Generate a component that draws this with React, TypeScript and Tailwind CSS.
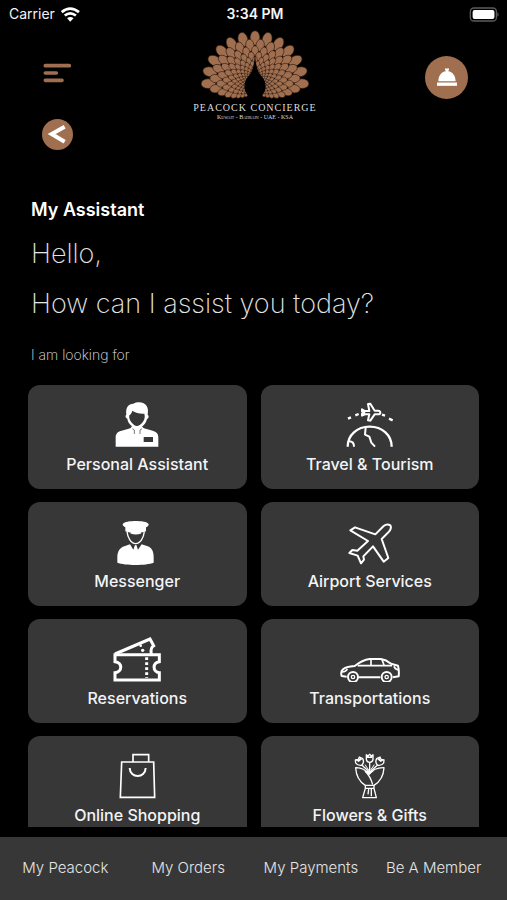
import type { ReactNode } from 'react';

const feathers = [0, 1, 2, 3, 4, 5, 6, 7, 8, 9, 10].flatMap((ring) => {
  const radius = 137 * Math.pow(0.845, ring);
  const items = [];
  for (let i = -11; i <= 11; i++) {
    const angle = (ring % 2 ? i + 0.5 : i) * 15;
    const rad = (angle * Math.PI) / 180;
    const x = 202 + radius * Math.sin(rad) * 1.02;
    const y = 163 - radius * Math.cos(rad);
    const limit = ring === 0 ? 91 : 152;
    if (Math.abs(angle) > limit || y > 204 - radius * 0.08) continue;
    items.push({
      key: `${ring}-${i}`,
      x,
      y,
      angle,
      rx: radius * 0.108,
      ry: radius * 0.16,
      stroke: 0.8 + radius * 0.008,
    });
  }
  return items;
});

function PeacockLogo() {
  return (
    <div className="flex flex-col items-center font-['Liberation_Serif',serif] text-[#dedede]">
      <svg viewBox="40 2 324 210" className="h-[70px] w-[108px]" aria-hidden="true">
        {feathers.map((f) => (
          <ellipse
            key={f.key}
            cx={f.x}
            cy={f.y}
            rx={f.rx}
            ry={f.ry}
            transform={`rotate(${f.angle} ${f.x} ${f.y})`}
            fill="#a06f50"
            stroke="#24140c"
            strokeWidth={f.stroke}
          />
        ))}
        <path
          d="M202 72 C204 108 209 128 223 142 C238 160 237 184 222 200 L216 212 H188 L182 200 C167 184 166 160 181 142 C195 128 200 108 202 72Z"
          fill="#000"
        />
      </svg>
      <span className="mt-[3px] text-[10px] leading-[10px] tracking-widest whitespace-nowrap">PEACOCK CONCIERGE</span>
      <span className="text-[6px] leading-[8px] whitespace-nowrap [font-variant:small-caps]">
        Kuwait - Bahrain - UAE - KSA
      </span>
    </div>
  );
}

function TileIcon({ viewBox, children }: { viewBox: string; children: ReactNode }) {
  return (
    <svg
      viewBox={viewBox}
      className="h-12 w-15"
      fill="none"
      stroke="#fff"
      strokeWidth="7"
      strokeLinejoin="round"
      aria-hidden="true"
    >
      {children}
    </svg>
  );
}

const AssistantIcon = () => (
  <TileIcon viewBox="262 60 180 144">
    <path
      d="M288 200 V171 C288 160 296 154 306 152 L332 145 L337 139 C328 132 324 124 323 116 C316 113 317 106 320 104 C317 82 327 71 341 71 C355 63 375 66 381 78 C386 86 385 96 384 104 C389 108 387 115 382 117 C380 126 375 134 367 140 L373 145 L399 152 C410 155 416 161 416 171 V200Z"
      fill="#fff"
      stroke="none"
    />
    <path
      d="M329 106 C334 103 337 97 338 92 C347 99 362 102 374 101 C376 109 376 117 370 125 C363 134 357 138 352 138 C346 138 337 131 332 122 C329 117 328 111 329 106Z"
      fill="#373737"
      stroke="none"
    />
    <path d="M338 146 L344 150 V162 M367 146 L361 150 V162" stroke="#373737" strokeWidth="2" />
    <rect x="372" y="171" width="28" height="15" rx="1" fill="#373737" stroke="none" />
  </TileIcon>
);

const TravelIcon = () => (
  <TileIcon viewBox="256 60 180 144">
    <path d="M279 200 C279 166 307 140 345 140 C383 140 411 166 411 200" />
    <path d="M333 142 L331 164 L344 170 L350 188 L361 200 M283 184 Q298 184 298 200" strokeWidth="6" />
    <path d="M280 116 L289 112 M302 106 L312 102 M382 104 L391 107 M403 116 L414 121" />
    <path
      d="M322 88 L331 93 H344 L340 72 L347 71 L360 92 H370 Q377 93 377 98 Q377 103 370 103 H360 L347 122 L340 121 L344 103 H331 L322 107 V101 L329 98 L322 94Z"
      strokeWidth="6"
    />
  </TileIcon>
);

const MessengerIcon = () => (
  <TileIcon viewBox="262 66 180 144">
    <path
      d="M309 88 C311 80 334 78 348 78 C363 78 385 80 387 88 C387 93 382 96 379 97 V109 C362 116 333 116 317 109 V97 C313 95 309 92 309 88Z"
      fill="#fff"
      stroke="none"
    />
    <path d="M322 110 C324 128 334 146 348 146 C362 146 372 128 374 110" strokeWidth="4" />
    <path
      d="M293 203 V188 C293 168 301 158 314 154 L331 148 L341 164 L346 151 H350 L355 164 L366 148 L384 154 C396 158 402 168 402 188 V203 C379 212 316 212 293 203Z"
      fill="#fff"
      stroke="none"
    />
    <path d="M346 151 L344 163 L348 178 L352 163 L350 151Z" fill="#fff" stroke="none" />
    <path d="M333 113 Q348 119 364 113" strokeWidth="5" />
  </TileIcon>
);

const AirportIcon = () => (
  <TileIcon viewBox="256 66 180 144">
    <path
      d="M287 106 L301 97 L362 118 L387 93 Q397 85 407 91 Q412 99 403 110 L381 132 L401 189 L387 200 L355 154 L326 184 L328 194 L319 205 L309 182 L284 174 L293 165 L308 167 L340 138Z"
      strokeWidth="6"
    />
  </TileIcon>
);

const ReservationsIcon = () => (
  <TileIcon viewBox="262 66 180 144">
    <path
      d="M286 128 H419 V149 C398 151 398 180 419 182 V204 H286 V182 C309 180 309 151 286 149 Z"
      strokeWidth="9"
      strokeLinejoin="miter"
    />
    <path d="M286 126 L391 81 L402 101 Q391 108 395 126" strokeWidth="9" strokeLinejoin="miter" />
    <path d="M381 136 V198" strokeWidth="9" strokeDasharray="8 7" />
    <circle cx="369" cy="115" r="5" fill="#fff" stroke="none" />
    <circle cx="363" cy="101" r="4" fill="#fff" stroke="none" />
  </TileIcon>
);

const CarIcon = () => (
  <TileIcon viewBox="256 66 180 144">
    <path
      d="M276 194 L261 192 Q257 178 265 172 Q273 164 300 162 Q323 144 345 141 H379 Q394 143 409 155 L430 161 Q434 175 432 193 L415 196 M312 196 H377"
      strokeWidth="6"
    />
    <path d="M309 161 H412 M349 143 V161 M382 143 L388 159" strokeWidth="5" />
    <path d="M261 180 Q275 179 278 170 M418 163 Q421 173 432 174" strokeWidth="5" />
    <circle cx="295" cy="195" r="15" strokeWidth="6" />
    <circle cx="396" cy="195" r="15" strokeWidth="6" />
    <circle cx="295" cy="195" r="5" strokeWidth="4" />
    <circle cx="396" cy="195" r="5" strokeWidth="4" />
  </TileIcon>
);

const ShoppingIcon = () => (
  <TileIcon viewBox="322 63 180 144">
    <path d="M366 96 H462 L465 202 H362Z M400 94 V74 H447 V94" strokeWidth="5" strokeLinejoin="miter" />
    <path d="M390 114 C391 146 437 146 438 114" strokeWidth="6" />
  </TileIcon>
);

const FlowersIcon = () => (
  <TileIcon viewBox="271 63 180 144">
    <g strokeWidth="4">
      <path d="M350 74 L355 78 L360 73 L365 78 L370 74 V88 Q369 96 360 97 Q351 96 350 88Z M360 97 V124" />
      <path d="M329 81 L326 88 L317 90 L318 99 Q324 108 336 106 Q345 97 339 86Z M337 106 L357 124" />
      <path d="M391 81 L394 88 L403 90 L402 99 Q396 108 384 106 Q375 97 381 86Z M383 106 L363 124" />
      <path d="M346 104 L357 120 M374 104 L363 120" strokeWidth="3" />
      <path d="M318 113 Q342 112 358 133 Q374 112 403 113 Q401 149 373 166 H347 Q320 149 318 113Z" />
      <path d="M346 124 Q362 138 369 164 M347 166 V175 H373 V166 M347 175 L339 203 H380 L373 175 M357 177 L355 193 M365 177 V199" />
    </g>
    <path d="M348 122 H373 L359 134Z M352 76 L360 80 L368 76 V84 H352Z" fill="#fff" stroke="none" />
    <path d="M318 91 L327 89 L331 83 L338 87 L327 96Z M402 91 L393 89 L389 83 L382 87 L393 96Z" fill="#fff" stroke="none" />
  </TileIcon>
);

const services = [
  { label: 'Personal Assistant', icon: <AssistantIcon /> },
  { label: 'Travel & Tourism', icon: <TravelIcon /> },
  { label: 'Messenger', icon: <MessengerIcon /> },
  { label: 'Airport Services', icon: <AirportIcon /> },
  { label: 'Reservations', icon: <ReservationsIcon /> },
  { label: 'Transportations', icon: <CarIcon /> },
  { label: 'Online Shopping', icon: <ShoppingIcon /> },
  { label: 'Flowers & Gifts', icon: <FlowersIcon /> },
];

const links = ['My Peacock', 'My Orders', 'My Payments', 'Be A Member'];

function StatusBar() {
  return (
    <div className="grid h-7 grid-cols-3 items-center pr-1.5 pl-[9px] text-sm text-gray-100">
      <div className="flex items-center gap-1.5">
        <span>Carrier</span>
        <svg viewBox="186 16 56 44" className="h-[15px] w-[19px]" fill="none" stroke="#fff" strokeWidth="8" aria-hidden="true">
          <path d="M188 31 Q213 10 239 31 M197 41 Q213 28 230 41" />
          <path d="M204 49 Q213 42 223 49 L213 59Z" fill="#fff" stroke="none" />
        </svg>
      </div>
      <span className="text-center font-semibold">3:34 PM</span>
      <svg viewBox="1409 16 96 46" className="h-[15px] w-8 justify-self-end" aria-hidden="true">
        <rect x="1412" y="19" width="80" height="40" rx="11" fill="none" stroke="#5c5c5c" strokeWidth="4" />
        <rect x="1419" y="25" width="67" height="28" rx="6" fill="#fff" />
        <path d="M1495 32 Q1503 39 1495 46Z" fill="#5c5c5c" />
      </svg>
    </div>
  );
}

export default function App() {
  return (
    <div className="flex h-screen flex-col bg-black font-['Inter',sans-serif] text-white antialiased">
      <StatusBar />

      <header className="grid grid-cols-[1fr_auto_1fr] items-start pr-[39px] pl-[42px]">
        <div className="flex flex-col items-start gap-9 pt-[34px]">
          <button type="button" aria-label="Menu">
            <svg viewBox="0 0 90 63" className="h-[21px] w-[30px]" stroke="#a06f50" strokeWidth="11" strokeLinecap="round" aria-hidden="true">
              <path d="M10 11 H82 M10 33 H43 M10 55 H60" />
            </svg>
          </button>
          <button type="button" aria-label="Back" className="flex size-[31px] items-center justify-center rounded-full bg-[#a06f50]">
            <svg viewBox="0 0 93 93" className="size-[31px]" fill="none" stroke="#fff" strokeWidth="12" aria-hidden="true">
              <path d="M68 23 L29 45 L68 68" />
            </svg>
          </button>
        </div>
        <div className="pt-0.5">
          <PeacockLogo />
        </div>
        <div className="flex justify-end pt-7">
          <button type="button" aria-label="Call concierge" className="flex size-[43px] items-center justify-center rounded-full bg-[#a06f50]">
            <svg viewBox="0 0 60 56" className="h-[19px] w-5" fill="#fff" aria-hidden="true">
              <path d="M4 39 C5 20 14 11 26 9 V6 H24 V1 H36 V6 H34 V9 C46 11 55 20 56 39Z" />
              <path d="M0 43 H60 V53 H0Z" />
            </svg>
          </button>
        </div>
      </header>

      <main className="flex min-h-0 flex-1 flex-col pt-[50px]">
        <div className="px-[31px] text-[#e4e4e4]">
          <h1 className="text-lg leading-5 font-semibold text-white">My Assistant</h1>
          <p className="mt-4 text-[27px] leading-9 font-extralight">Hello,</p>
          <p className="mt-3.5 text-[27px] leading-9 font-extralight">How can I assist you today?</p>
          <p className="mt-[23px] text-sm leading-5 font-extralight">I am looking for</p>
        </div>

        <div className="mt-5 grid min-h-0 flex-1 auto-rows-[104px] grid-cols-2 gap-x-3.5 gap-y-[13px] overflow-y-auto px-7 [scrollbar-width:none]">
          {services.map(({ label, icon }) => (
            <button
              key={label}
              type="button"
              className="flex flex-col items-center rounded-xl bg-[#373737] pt-[15px] text-base leading-8 font-medium text-gray-100"
            >
              {icon}
              {label}
            </button>
          ))}
        </div>
      </main>

      <nav className="mt-2.5 grid h-[63px] shrink-0 grid-cols-4 items-center bg-[#373737] pr-3 pl-1 text-center text-[15px] font-light text-[#e4e4e4]">
        {links.map((link) => (
          <a key={link} href="#">
            {link}
          </a>
        ))}
      </nav>
    </div>
  );
}
